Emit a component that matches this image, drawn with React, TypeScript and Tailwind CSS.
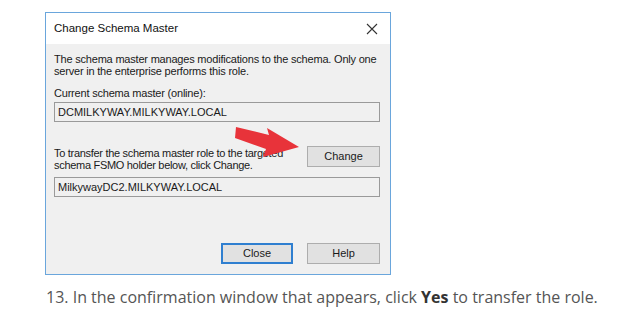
import React from 'react';

const ui = { fontFamily: '"Liberation Sans", Arial, sans-serif' };

const Field: React.FC<{ value: string }> = ({ value }) => (
  <div className="h-[20px] border border-[#9a9a9a] bg-[#f0f0f0] px-[3px] text-[11px] leading-[18px] text-[#1a1a1a]">
    {value}
  </div>
);

const Btn: React.FC<{ label: string; primary?: boolean }> = ({ label, primary }) => (
  <div
    className={
      'flex h-[21px] items-center justify-center bg-[#e1e1e1] text-[11px] text-[#1a1a1a] ' +
      (primary ? 'w-[72px] border-2 border-[#2f7fd0]' : 'w-[73px] border border-[#adadad]')
    }
  >
    {label}
  </div>
);

const Arrow = () => (
  <svg className="absolute left-[189px] top-[108px]" width="70" height="44" viewBox="0 0 70 44">
    <path d="M1 6 L34 14 L32 7 L64 26 L28 36 L31 28 L0 17 Z" fill="#e8333a" />
  </svg>
);

export default function App() {
  return (
    <div className="flex min-h-[336px] w-[625px] flex-col bg-white pt-[12px]">
      <div className="ml-[45px] relative flex h-[263px] w-[346px] flex-col border border-[#6aa6dc] bg-[#f0f0f0]" style={ui}>
        <div className="flex h-[31px] items-center justify-between bg-white pl-[8px] pr-[10px]">
          <span className="text-[11.5px] text-[#111]">Change Schema Master</span>
          <svg width="12" height="12" viewBox="0 0 12 12" className="mr-[2px]">
            <path d="M1 1 L11 11 M11 1 L1 11" stroke="#333" strokeWidth="1.1" />
          </svg>
        </div>
        <div className="flex flex-1 flex-col pl-[8px] pr-[10px] text-[11px] text-[#1a1a1a]">
          <p className="mt-[10px] leading-[11.5px] tracking-[-0.2px]">
            The schema master manages modifications to the schema. Only one server in the enterprise performs this role.
          </p>
          <p className="mt-[10px] leading-[12px] tracking-[-0.2px]">Current schema master (online):</p>
          <div className="mt-[3px]">
            <Field value="DCMILKYWAY.MILKYWAY.LOCAL" />
          </div>
          <div className="mt-[24px] flex items-start justify-between">
            <p className="mt-[1px] w-[250px] leading-[12px] tracking-[-0.3px]">
              To transfer the schema master role to the targeted schema FSMO holder below, click Change.
            </p>
            <Btn label="Change" />
          </div>
          <div className="mt-[6px]">
            <Field value="MilkywayDC2.MILKYWAY.LOCAL" />
          </div>
          <div className="mt-[46px] flex justify-end gap-[14px]">
            <Btn label="Close" primary />
            <Btn label="Help" />
          </div>
        </div>
        <Arrow />
      </div>
      <div className="flex pl-[46px] pt-[12px]">
        <p className="text-[16px] leading-[20px] text-[#555]" style={{ fontFamily: '"Open Sans", sans-serif' }}>
          13. In the confirmation window that appears, click <b className="font-bold text-[#333]">Yes</b> to transfer the role.
        </p>
      </div>
    </div>
  );
}
